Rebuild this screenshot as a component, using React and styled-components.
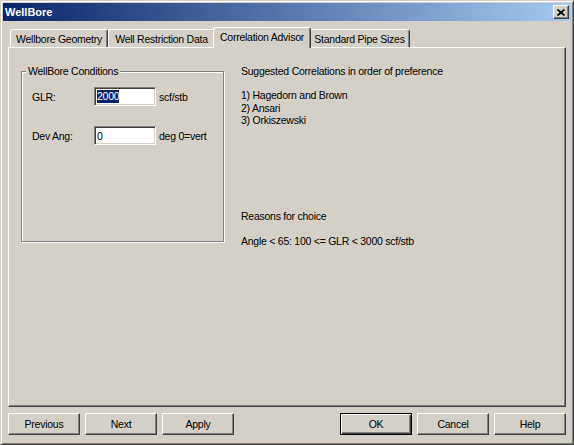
import React from 'react';
import styled, { createGlobalStyle } from 'styled-components';

const Global = createGlobalStyle`
  html, body { margin: 0; padding: 0; background: #d4d0c8; }
  body {
    font-family: "Liberation Sans", Arial, sans-serif;
    font-size: 10.5px;
    letter-spacing: -0.25px;
    color: #000;
  }
  * { box-sizing: border-box; }
`;

const Window = styled.div`
  width: 574px;
  height: 445px;
  background: #d4d0c8;
  border: 1px solid;
  border-color: #d4d0c8 #404040 #404040 #d4d0c8;
  box-shadow: inset 1px 1px #fff, inset -1px -1px #808080;
  padding: 2px;
  display: flex;
  flex-direction: column;
`;

const TitleBar = styled.div`
  height: 18px;
  flex: none;
  background: linear-gradient(to right, #0a246a, #a6caf0);
  display: flex;
  align-items: center;
  justify-content: space-between;
  padding: 0 2px 0 2px;
`;

const Title = styled.span`
  color: #fff;
  font-weight: bold;
  font-size: 11px;
  letter-spacing: 0;
`;

const CloseButton = styled.div`
  width: 16px;
  height: 14px;
  background: #d4d0c8;
  border: 1px solid;
  border-color: #fff #404040 #404040 #fff;
  box-shadow: inset -1px -1px #808080;
  display: flex;
  align-items: center;
  justify-content: center;
`;

const Content = styled.div`
  flex: 1;
  display: flex;
  flex-direction: column;
  padding: 0 5px;
`;

const TabStrip = styled.div`
  margin-top: 6px;
  height: 20px;
  display: flex;
  align-items: flex-end;
  padding-left: 2px;
`;

const Tab = styled.div`
  width: ${(p) => p.$w}px;
  height: ${(p) => (p.$active ? 21 : 18)}px;
  margin: ${(p) => (p.$active ? '0 -2px -1px' : '0')};
  position: relative;
  z-index: ${(p) => (p.$active ? 1 : 0)};
  background: #d4d0c8;
  border: 1px solid;
  border-bottom: none;
  border-color: #fff #404040 transparent #fff;
  border-radius: 3px 3px 0 0;
  box-shadow: inset -1px 0 #808080;
  display: flex;
  align-items: center;
  justify-content: center;
  padding-bottom: ${(p) => (p.$active ? 2 : 0)}px;
  white-space: nowrap;
`;

const Panel = styled.div`
  height: 360px;
  flex: none;
  border: 1px solid;
  border-color: #fff #404040 #404040 #fff;
  box-shadow: inset -1px -1px #808080;
  padding: 0 12px;
  display: grid;
  grid-template-columns: 203px 1fr;
  column-gap: 17px;
  align-items: start;
`;

const Group = styled.div`
  position: relative;
  margin-top: 23px;
  width: 203px;
  height: 171px;
  border: 1px solid #808080;
  box-shadow: inset 1px 1px #fff, 1px 1px #fff;
  padding: 15px 0 0 10px;
`;

const GroupLegend = styled.span`
  position: absolute;
  top: -7px;
  left: 4px;
  padding: 0 2px;
  line-height: 13px;
  background: #d4d0c8;
  white-space: nowrap;
`;

const FieldGrid = styled.div`
  display: grid;
  grid-template-columns: 62px 62px auto;
  grid-auto-rows: 19px;
  row-gap: 20px;
  align-items: center;
`;

const Label = styled.span`
  white-space: nowrap;
`;

const Field = styled.div`
  width: 62px;
  height: 19px;
  background: #fff;
  border: 1px solid;
  border-color: #808080 #fff #fff #808080;
  box-shadow: inset 1px 1px #404040, inset -1px -1px #d4d0c8;
  padding-left: 2px;
  display: flex;
  align-items: center;
`;

const Selected = styled.span`
  background: #0a246a;
  color: #fff;
  line-height: 13px;
`;

const Unit = styled.span`
  padding-left: 3px;
  white-space: nowrap;
`;

const InfoColumn = styled.div`
  padding-top: 17px;
  display: flex;
  flex-direction: column;
`;

const Para = styled.div`
  line-height: 12.5px;
  margin-top: ${(p) => p.$gap || 0}px;
  white-space: nowrap;
`;

const ButtonRow = styled.div`
  margin-top: 6px;
  height: 22px;
  display: flex;
  gap: 5px;
`;

const Spacer = styled.div`
  flex: 1;
`;

const Button = styled.div`
  width: 72px;
  height: 22px;
  background: #d4d0c8;
  border: 1px solid;
  border-color: ${(p) => (p.$default ? '#000' : '#fff #404040 #404040 #fff')};
  box-shadow: ${(p) =>
    p.$default
      ? 'inset 1px 1px #fff, inset -1px -1px #404040, inset -2px -2px #808080'
      : 'inset -1px -1px #808080'};
  display: flex;
  align-items: center;
  justify-content: center;
`;

const CloseIcon = () => (
  <svg width="8" height="7" viewBox="0 0 8 7">
    <path d="M0.5 0.5 L7.5 6.5 M7.5 0.5 L0.5 6.5" stroke="#000" strokeWidth="1.7" />
  </svg>
);

const tabs = [
  { label: 'Wellbore Geometry', w: 98 },
  { label: 'Well Restriction Data', w: 107 },
  { label: 'Correlation Advisor', w: 98, active: true },
  { label: 'Standard Pipe Sizes', w: 101 },
];

export default function App() {
  return (
    <>
      <Global />
      <Window>
        <TitleBar>
          <Title>WellBore</Title>
          <CloseButton>
            <CloseIcon />
          </CloseButton>
        </TitleBar>
        <Content>
          <TabStrip>
            {tabs.map((t) => (
              <Tab key={t.label} $w={t.w} $active={t.active}>
                {t.label}
              </Tab>
            ))}
          </TabStrip>
          <Panel>
            <Group>
              <GroupLegend>WellBore Conditions</GroupLegend>
              <FieldGrid>
                <Label>GLR:</Label>
                <Field>
                  <Selected>2000</Selected>
                </Field>
                <Unit>scf/stb</Unit>
                <Label>Dev Ang:</Label>
                <Field>0</Field>
                <Unit>deg 0=vert</Unit>
              </FieldGrid>
            </Group>
            <InfoColumn>
              <Para>Suggested Correlations in order of preference</Para>
              <Para $gap={11.5}>1) Hagedorn and Brown</Para>
              <Para>2) Ansari</Para>
              <Para>3) Orkiszewski</Para>
              <Para $gap={83.5}>Reasons for choice</Para>
              <Para $gap={12.5}>Angle &lt; 65: 100 &lt;= GLR &lt; 3000 scf/stb</Para>
            </InfoColumn>
          </Panel>
          <ButtonRow>
            <Button>Previous</Button>
            <Button>Next</Button>
            <Button>Apply</Button>
            <Spacer />
            <Button $default>OK</Button>
            <Button>Cancel</Button>
            <Button>Help</Button>
          </ButtonRow>
        </Content>
      </Window>
    </>
  );
}
